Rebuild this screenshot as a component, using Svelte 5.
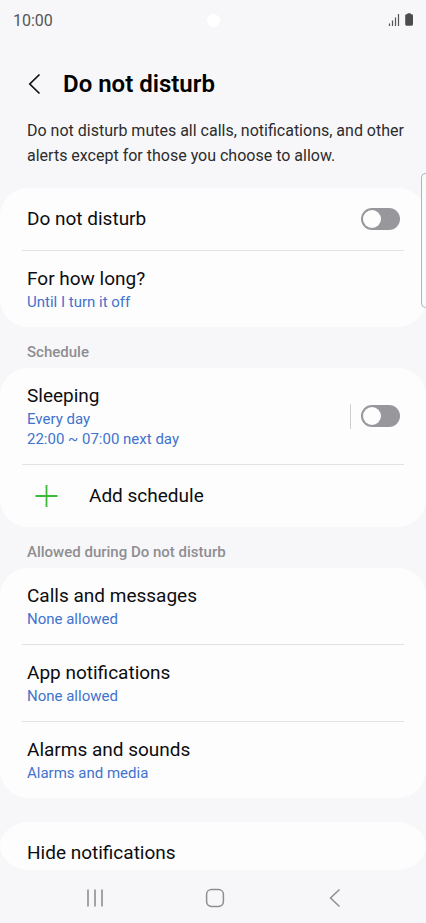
<script>
    let dnd = false;
    let sleeping = false;

    const allowed = [
        { title: 'Calls and messages', value: 'None allowed' },
        { title: 'App notifications', value: 'None allowed' },
        { title: 'Alarms and sounds', value: 'Alarms and media' }
    ];
</script>

<div class="screen">
    <div class="status-bar">
        <span class="time">10:00</span>
        <span class="camera"></span>
        <svg class="status-icons" width="27" height="14" viewBox="0 0 27 14">
            <path d="M2.500 13v-2.500M5.500 13V7.500M8.500 13V4.500M11.500 13V1" stroke="#555" stroke-width="1.200" fill="none" />
            <path d="M20.200 1.200q0-.9.9-.9h2q.9 0 .9.9h.6q1.400 0 1.400 1.400v8.700q0 1.400-1.400 1.400h-5q-1.400 0-1.400-1.400V2.600q0-1.400 1.400-1.400z" fill="#4c4c4c" />
        </svg>
    </div>

    <header>
        <button class="back" aria-label="Back">
            <svg width="14" height="22" viewBox="0 0 14 22">
                <path d="M12.500 1.500L2.800 11l9.700 9.500" fill="none" stroke="#111" stroke-width="1.700" />
            </svg>
        </button>
        <h1>Do not disturb</h1>
    </header>

    <main>
        <p class="intro">Do not disturb mutes all calls, notifications, and other alerts except for those you choose to allow.</p>

        <section class="card">
            <div class="row">
                <label class="title" for="dnd">Do not disturb</label>
                <input id="dnd" class="switch" type="checkbox" bind:checked={dnd} />
            </div>
            <button class="row">
                <span class="text">
                    <span class="title">For how long?</span>
                    <span class="value">Until I turn it off</span>
                </span>
            </button>
        </section>

        <h2>Schedule</h2>
        <section class="card">
            <div class="row">
                <label class="text" for="sleeping">
                    <span class="title">Sleeping</span>
                    <span class="value">Every day</span>
                    <span class="value">22:00 ~ 07:00 next day</span>
                </label>
                <span class="separator"></span>
                <input id="sleeping" class="switch" type="checkbox" bind:checked={sleeping} />
            </div>
            <button class="row">
                <svg class="plus" width="40" height="24" viewBox="0 0 40 24">
                    <path d="M19.500 1v22M8.500 12h22" stroke="#3dba37" stroke-width="1.800" />
                </svg>
                <span class="title">Add schedule</span>
            </button>
        </section>

        <h2>Allowed during Do not disturb</h2>
        <section class="card">
            {#each allowed as item}
                <button class="row">
                    <span class="text">
                        <span class="title">{item.title}</span>
                        <span class="value">{item.value}</span>
                    </span>
                </button>
            {/each}
        </section>

        <section class="card peek">
            <button class="row">
                <span class="title">Hide notifications</span>
            </button>
        </section>
    </main>

    <nav>
        <button aria-label="Recent apps">
            <svg width="20" height="20" viewBox="0 0 20 20">
                <path d="M3 1.500v17M10 1.500v17M17 1.500v17" stroke="#8e8e90" stroke-width="1.600" />
            </svg>
        </button>
        <button aria-label="Home">
            <svg width="20" height="20" viewBox="0 0 20 20">
                <rect x="1.600" y="1.600" width="16.800" height="16.800" rx="4.800" fill="none" stroke="#8e8e90" stroke-width="1.500" />
            </svg>
        </button>
        <button aria-label="Back">
            <svg width="20" height="20" viewBox="0 0 20 20">
                <path d="M14.500 1.500L5.500 10l9 8.500" fill="none" stroke="#8e8e90" stroke-width="1.500" />
            </svg>
        </button>
    </nav>

    <div class="edge-handle"></div>
</div>

<style>
    :global(body) {
        background-color: #f7f7f9;
    }

    .screen {
        position: relative;
        display: flex;
        flex-direction: column;
        min-height: 100vh;
        overflow: hidden;
        background-color: #f7f7f9;
        color: #0c0c0e;
        font-family: Roboto, "Liberation Sans", sans-serif;
    }

    button {
        margin: 0;
        padding: 0;
        border: none;
        background: none;
        color: inherit;
        font: inherit;
        text-align: left;
        cursor: pointer;
    }

    svg {
        display: block;
    }

    .status-bar {
        display: grid;
        grid-template-columns: 1fr auto 1fr;
        align-items: center;
        height: 40px;
        padding: 0 12px 0 13px;
    }

    .time {
        font-size: 16px;
        color: #555;
    }

    .camera {
        width: 13px;
        height: 13px;
        border-radius: 50%;
        background-color: #fff;
    }

    .status-icons {
        justify-self: end;
    }

    header {
        display: flex;
        align-items: center;
        gap: 22px;
        padding: 28px 27px 18px;
    }

    h1 {
        margin: 0;
        font-size: 24px;
        line-height: 32px;
        font-weight: 600;
        color: #000;
    }

    .intro {
        margin: 0;
        padding: 0 16px 20px 27px;
        font-size: 16px;
        line-height: 25px;
        color: #2c2c2e;
    }

    h2 {
        margin: 0;
        padding: 10px 27px 0;
        font-size: 15px;
        line-height: 31px;
        font-weight: 500;
        color: #8e8e91;
    }

    .card {
        border-radius: 28px;
        background-color: #fdfdfe;
    }

    .row {
        position: relative;
        display: flex;
        align-items: center;
        width: 100%;
        min-height: 62px;
        padding: 15px 26px 15px 27px;
        box-sizing: border-box;
    }

    .row + .row {
        margin-top: 1px;
    }

    .row + .row::before {
        content: "";
        position: absolute;
        top: -1px;
        left: 22px;
        right: 22px;
        height: 1px;
        background-color: #e2e2e4;
    }

    .text {
        display: flex;
        flex-direction: column;
        flex: 1;
    }

    .title {
        flex: 1;
        font-size: 19px;
        line-height: 26px;
    }

    .value {
        font-size: 15px;
        line-height: 20px;
        color: #3f73cd;
    }

    .separator {
        width: 1px;
        height: 25px;
        margin-right: 10px;
        background-color: #cfcfd2;
    }

    .switch {
        appearance: none;
        display: flex;
        flex: none;
        width: 39px;
        height: 22px;
        margin: 0;
        padding: 2px;
        box-sizing: border-box;
        border-radius: 11px;
        background-color: #98979c;
        cursor: pointer;
    }

    .switch::before {
        content: "";
        width: 18px;
        height: 18px;
        border-radius: 50%;
        background-color: #fdfdfe;
    }

    .switch:checked {
        justify-content: flex-end;
        background-color: #3f73cd;
    }

    .plus {
        margin-right: 22px;
    }

    /* last group runs on below the navigation bar */
    .peek {
        height: 48px;
        margin-top: 24px;
        border-radius: 30px / 24px;
        overflow: hidden;
    }

    nav {
        display: flex;
        justify-content: center;
        gap: 100px;
        padding: 18px 0 12px 3px;
    }

    .edge-handle {
        position: absolute;
        top: 173px;
        right: -1px;
        width: 5px;
        height: 133px;
        border: 1px solid #b4b4b6;
        border-right: none;
        border-radius: 5px 0 0 5px;
        background-color: #fafafb;
    }
</style>
